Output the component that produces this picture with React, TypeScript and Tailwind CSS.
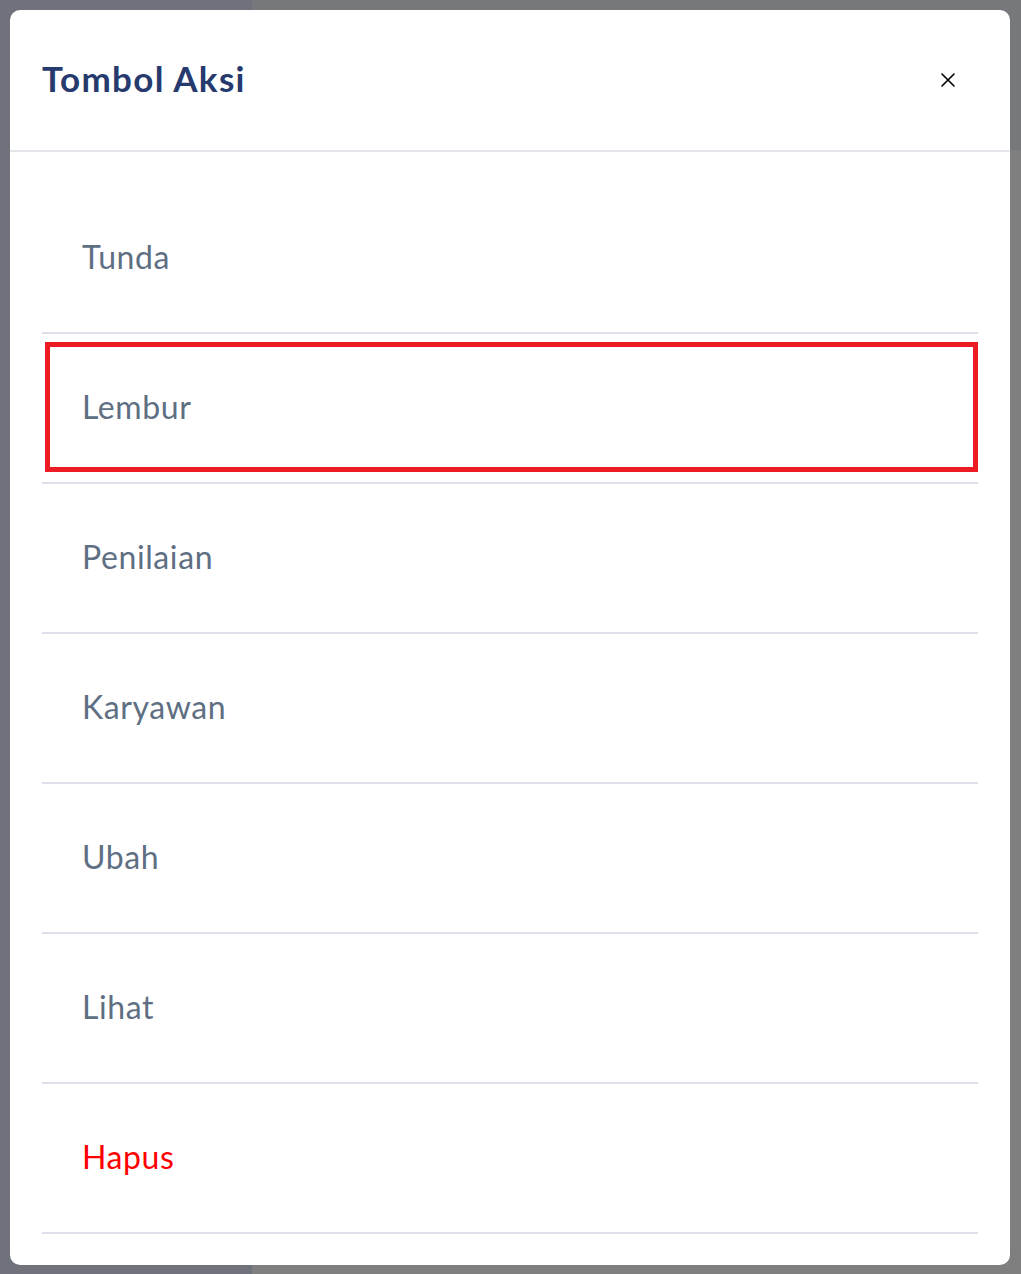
import React from "react";

const items = [
  { label: "Tunda" },
  { label: "Lembur", highlight: true },
  { label: "Penilaian" },
  { label: "Karyawan" },
  { label: "Ubah" },
  { label: "Lihat" },
  { label: "Hapus", danger: true },
];

export default function App() {
  return (
    <div className="relative w-[1021px] h-[1274px] overflow-hidden bg-[#7f7f7f]" style={{ fontFamily: "Lato, 'Noto Sans', sans-serif" }}>
      <div className="flex h-full">
        <div className="w-[252px] h-full bg-[#6f727a]" />
        <div className="flex-1 flex flex-col">
          <div className="h-[150px] bg-[#77787c]" />
          <div className="flex-1 bg-[#7f7f7f]" />
        </div>
      </div>

      <div className="absolute left-[10px] top-[10px] w-[1000px] h-[1255px] bg-white rounded-[10px] flex flex-col">
        <div className="h-[142px] shrink-0 flex items-center justify-between pl-8 pr-[54px] pb-[3px] border-b-2 border-[#e3e6ea]">
          <h2 className="text-[35px] font-bold text-[#263a6e] tracking-[1.3px]">Tombol Aksi</h2>
          <svg width="16" height="16" viewBox="0 0 16 16" className="text-black mt-[3px]">
            <path d="M2 2 L14 14 M14 2 L2 14" stroke="currentColor" strokeWidth="1.6" strokeLinecap="round" />
          </svg>
        </div>
        <div className="pt-[32px] px-8 pb-[31px] flex flex-col">
          {items.map((it) => (
            <div key={it.label} className="relative h-[150px] flex items-center pl-10 pb-[2px] border-b-2 border-[#dde0ea]">
              <span className={`text-[32px] leading-none tracking-[0.6px] ${it.danger ? "text-[#ff0000]" : "text-[#5f6f83]"}`}>{it.label}</span>
              {it.highlight && (
                <div className="absolute left-[3px] right-0 top-[8px] bottom-[10px] border-[5px] border-[#ed1c24]" />
              )}
            </div>
          ))}
        </div>
      </div>
    </div>
  );
}
